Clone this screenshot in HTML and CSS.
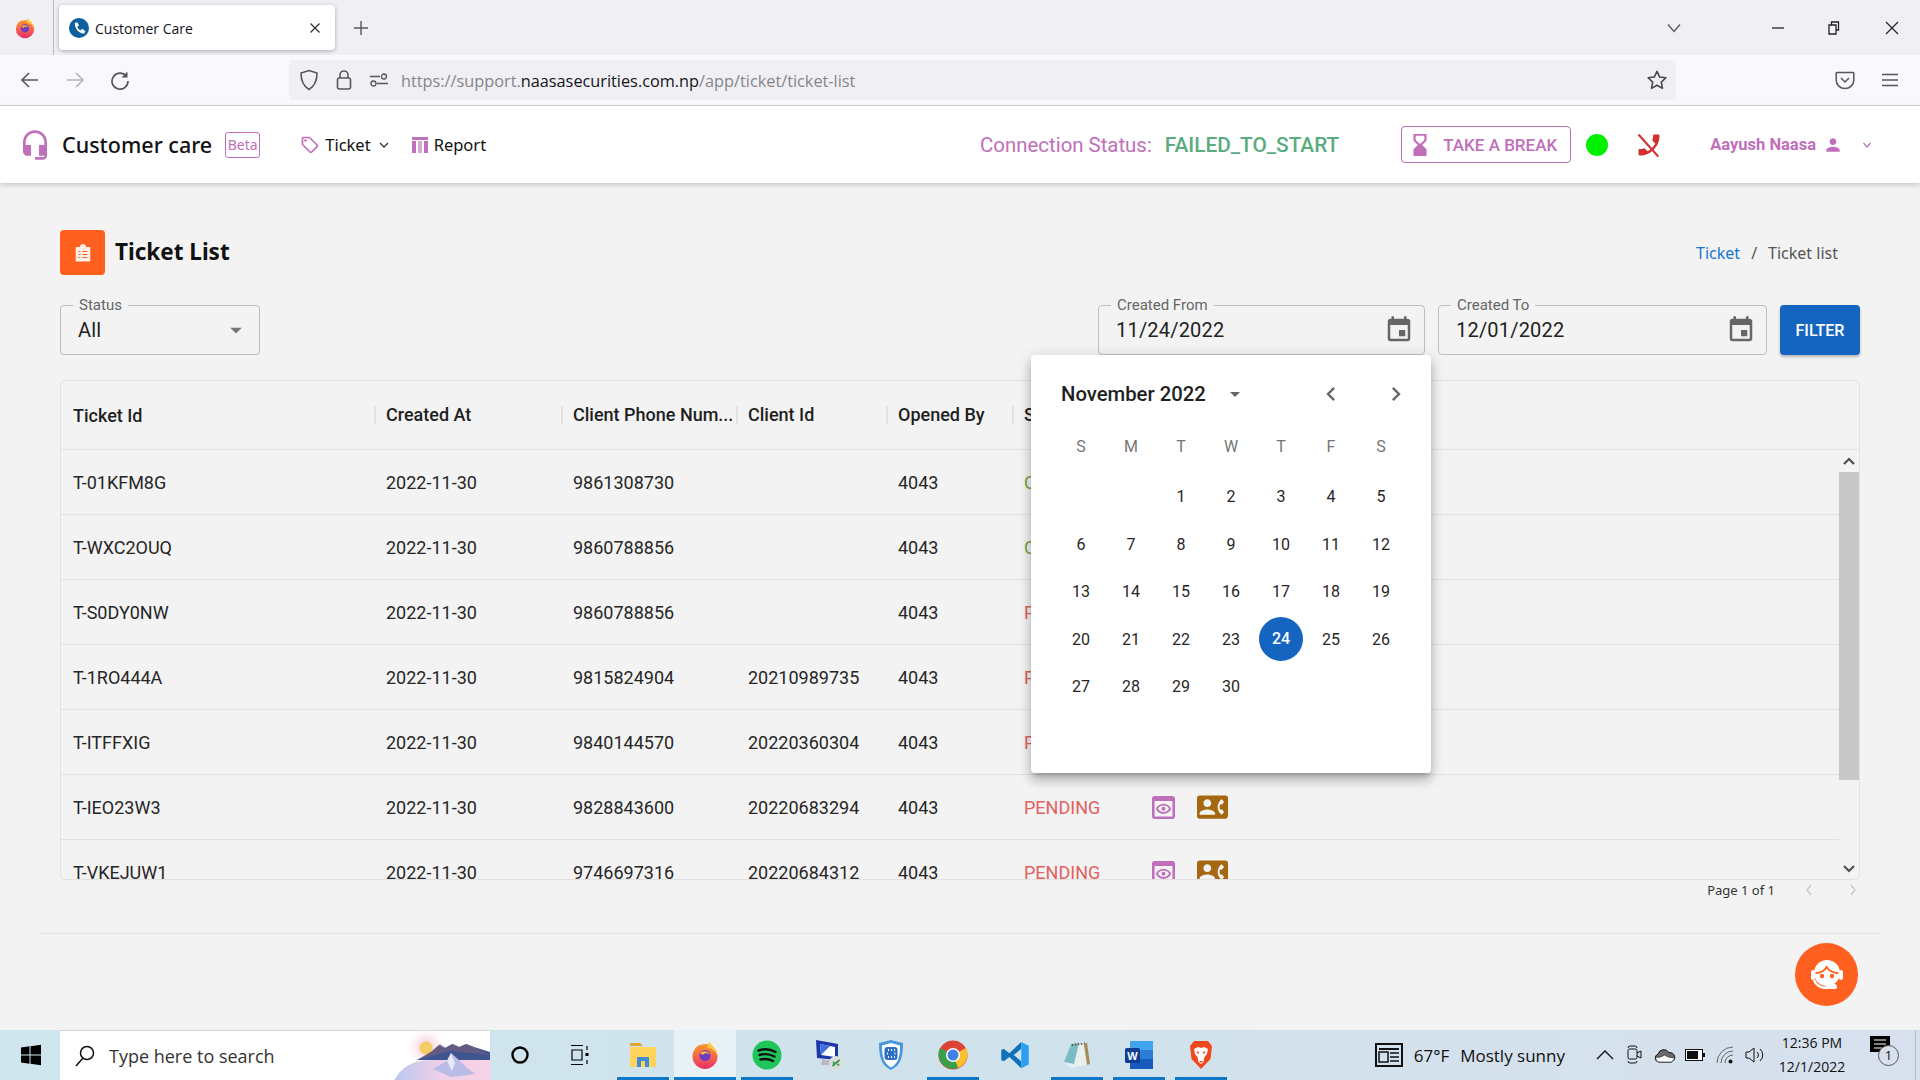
FILE: index.html
```html
<!DOCTYPE html>
<html lang="en">
<head>
    <meta charset="UTF-8">
    <title>Customer Care</title>
    <link rel="stylesheet" href="styles.css">
</head>
<body>
    <!-- browser window top -->
    <div class="tabstrip">
        <div class="ff-slot">
            <svg width="22" height="22" viewBox="0 0 30 30"><defs><linearGradient id="ffGlow" x1="0" y1="0" x2="0" y2="1"><stop offset="0" stop-color="#ff9a2e"/><stop offset="1" stop-color="#ea2f6a"/></linearGradient></defs><circle cx="15" cy="16.500" r="12.500" fill="url(#ffGlow)"/><path d="M19 1c1 4 8 7 8.500 15-2-5-6-8-10-8z" fill="#ffc93c"/><path d="M5 9c2-3 4-4 6-4-1 2 0 3 2 4z" fill="#ff8a2e"/><circle cx="15" cy="15.500" r="5.500" fill="#6f3cc3"/><path d="M10 13c3-3 8-2 10 1-3-1-6-1-7 1z" fill="#ffb02e"/></svg>
        </div>
        <div class="tab">
            <svg width="20" height="20" viewBox="0 0 24 24"><circle cx="12" cy="12" r="12" fill="#0d5f9e"/><path fill="#fff" d="M7 6l3-1 2 4-2 1.500c.5 2 2 3.500 4 4.500l1.500-2 4 2.500-1 3c-6 1-12-6-11.500-12.500z"/></svg>
            <span class="tab-title">Customer Care</span>
            <svg class="tab-close" width="12" height="12" viewBox="0 0 12 12"><path d="M1.500 1.500l9 9m0-9l-9 9" stroke="#333" stroke-width="1.300"/></svg>
        </div>
        <svg class="new-tab" width="16" height="16" viewBox="0 0 16 16"><path d="M8 1v14M1 8h14" stroke="#55555c" stroke-width="1.400"/></svg>
        <div class="window-btns">
            <svg class="tab-list" width="14" height="10" viewBox="0 0 14 10"><path d="M1 1.500l6 7 6-7" fill="none" stroke="#55555c" stroke-width="1.300"/></svg>
            <svg class="win-min" width="12" height="2" viewBox="0 0 12 2"><path d="M0 1h12" stroke="#222" stroke-width="1.300"/></svg>
            <svg class="win-max" width="12" height="14" viewBox="0 0 12 14"><path d="M3.500 3.500V1h7v8H8M1 4h7v9H1z" fill="none" stroke="#222" stroke-width="1.300"/></svg>
            <svg class="win-close" width="14" height="14" viewBox="0 0 14 14"><path d="M1 1l12 12m0-12L1 13" stroke="#222" stroke-width="1.200"/></svg>
        </div>
    </div>
    <div class="toolbar">
        <svg class="tool-back" width="20" height="20" viewBox="0 0 20 20"><path d="M18 10H3m6-7l-7 7 7 7" fill="none" stroke="#55555c" stroke-width="1.600"/></svg>
        <svg class="tool-fwd" width="20" height="20" viewBox="0 0 20 20"><path d="M2 10h15m-6-7l7 7-7 7" fill="none" stroke="#b4b4b8" stroke-width="1.600"/></svg>
        <svg class="tool-reload" width="20" height="20" viewBox="0 0 20 20"><path d="M16.500 6.500A8 8 0 1 0 18 11" fill="none" stroke="#55555c" stroke-width="1.700"/><path d="M17.500 1.500v6h-6z" fill="#55555c"/></svg>
        <div class="urlbar">
            <svg class="url-shield" width="20" height="22" viewBox="0 0 20 22"><path d="M10 1.500l8 2.500c0 8-2 13-8 16.500C4 17 2 12 2 4z" fill="none" stroke="#55555c" stroke-width="1.600"/></svg>
            <svg class="url-lock" width="16" height="22" viewBox="0 0 16 22"><rect x="1.500" y="9" width="13" height="11" rx="2" fill="none" stroke="#55555c" stroke-width="1.600"/><path d="M4 9V6a4 4 0 0 1 8 0v3" fill="none" stroke="#55555c" stroke-width="1.600"/></svg>
            <svg class="url-tune" width="20" height="14" viewBox="0 0 20 14"><path d="M1 3.500h10M1.500 10.500H1M8 10.500h11" stroke="#55555c" stroke-width="1.500"/><circle cx="15" cy="3.500" r="2.500" fill="none" stroke="#55555c" stroke-width="1.300"/><circle cx="4.500" cy="10.500" r="2.500" fill="none" stroke="#55555c" stroke-width="1.300"/></svg>
            <span class="url-text">https://support.<b>naasasecurities.com.np</b>/app/ticket/ticket-list</span>
            <svg class="url-star" width="22" height="22" viewBox="0 0 24 24"><path d="M12 2.500l2.900 6.300 6.800.8-5 4.700 1.300 6.800-6-3.400-6 3.400 1.300-6.800-5-4.700 6.800-.8z" fill="none" stroke="#45454c" stroke-width="1.700" stroke-linejoin="round"/></svg>
        </div>
        <svg class="tool-pocket" width="20" height="20" viewBox="0 0 20 20"><path d="M2 2.500h16a.8.8 0 0 1 .8.8V10c0 5-4 8.500-8.800 8.500S1.200 15 1.200 10V3.300a.8.8 0 0 1 .8-.8z" fill="none" stroke="#55555c" stroke-width="1.500"/><path d="M6 8l4 4 4-4" fill="none" stroke="#55555c" stroke-width="1.500"/></svg>
        <svg class="tool-menu" width="16" height="14" viewBox="0 0 16 14"><path d="M0 1.500h16M0 7h16M0 12.500h16" stroke="#55555c" stroke-width="1.600"/></svg>
    </div>

    <!-- app header -->
    <header class="app-header">
        <svg class="brand-icon" width="32" height="32" viewBox="0 0 24 24"><path fill="#c06fbb" d="M12 1c-4.970 0-9 4.030-9 9v7c0 1.660 1.340 3 3 3h3v-8H5v-2c0-3.870 3.130-7 7-7s7 3.130 7 7v2h-4v8h4v1h-7v2h6c1.660 0 3-1.340 3-3V10c0-4.970-4.030-9-9-9z"/></svg>
        <span class="brand-name">Customer care</span>
        <span class="beta">Beta</span>
        <svg class="nav-tag" width="20" height="20" viewBox="0 0 24 24"><path fill="#c06fbb" d="M21.410 11.580l-9-9C12.050 2.220 11.550 2 11 2H4c-1.100 0-2 .9-2 2v7c0 .55.22 1.050.59 1.420l9 9c.36.36.86.58 1.410.58s1.050-.22 1.410-.59l7-7c.37-.36.59-.86.59-1.410s-.23-1.060-.59-1.420zM13 20.010L4 11V4h7v-.01l9 8.990-7 7.020z"/><circle cx="6.500" cy="6.500" r="1.500" fill="#c06fbb"/></svg>
        <span class="nav-link">Ticket</span>
        <svg class="nav-caret" width="10" height="6" viewBox="0 0 10 6"><path d="M1 1l4 4 4-4" fill="none" stroke="#333" stroke-width="1.300"/></svg>
        <svg class="nav-report" width="18" height="18" viewBox="0 0 18 18"><g fill="#c06fbb"><rect x="1" y="1" width="16" height="3"/><rect x="1" y="5" width="4" height="12"/><rect x="7" y="5" width="4" height="12" opacity=".6"/><rect x="13" y="5" width="4" height="12"/></g></svg>
        <span class="nav-link">Report</span>

        <div class="header-right">
            <span class="conn-label">Connection Status:</span>
            <span class="conn-value">FAILED_TO_START</span>
            <button class="break-btn">
                <svg width="20" height="24" viewBox="5 1 14 22"><path fill="#c06fbb" d="M6 2v6h.01L6 8.010 10 12l-4 4 .01.01H6V22h12v-5.990h-.01L18 16l-4-4 4-3.990-.01-.01H18V2H6zm2 1.500h8V7.500l-4 3.500-4-3.500z"/></svg>
                TAKE A BREAK
            </button>
            <span class="status-dot"></span>
            <svg class="phone-off" width="28" height="28" viewBox="0 0 24 24"><path fill="#d32f2f" transform="matrix(-1 0 0 1 24 0)" d="M6.620 10.790c1.440 2.830 3.760 5.140 6.590 6.590l2.200-2.200c.27-.27.67-.36 1.020-.24 1.120.37 2.330.57 3.570.57.55 0 1 .45 1 1V20c0 .55-.45 1-1 1-9.390 0-17-7.610-17-17 0-.55.45-1 1-1h3.500c.55 0 1 .45 1 1 0 1.250.2 2.450.57 3.570.11.35.03.74-.25 1.020l-2.200 2.200z"/><path d="M3 3l17 19" stroke="#d32f2f" stroke-width="1.800"/></svg>
            <span class="user-name">Aayush Naasa</span>
            <svg class="user-icon" width="20" height="20" viewBox="0 0 24 24"><path fill="#c06fbb" d="M12 12c2.210 0 4-1.790 4-4s-1.790-4-4-4-4 1.790-4 4 1.790 4 4 4zm0 2c-2.670 0-8 1.340-8 4v2h16v-2c0-2.660-5.330-4-8-4z"/></svg>
            <svg class="user-caret" width="8" height="6" viewBox="0 0 8 6"><path d="M.5 1L4 5l3.500-4" fill="none" stroke="#c06fbb" stroke-width="1.200"/></svg>
        </div>
    </header>

    <main class="page">
        <div class="title-row">
            <span class="title-icon">
                <svg width="16" height="18" viewBox="0 0 16 18"><path fill="#fff" d="M1.500 3H5a3 3 0 0 1 6 0h3.500a.8.8 0 0 1 .8.8v12.900a.8.8 0 0 1-.8.8h-13a.8.8 0 0 1-.8-.8V3.800a.8.8 0 0 1 .8-.8z" opacity=".9"/><path d="M3.500 7.500h2M7.500 7.500h5M3.500 10.500h2M7.500 10.500h5M3.500 13.500h2M7.500 13.500h5" stroke="#ff5f1f" stroke-width="1.200"/></svg>
            </span>
            <h1>Ticket List</h1>
            <nav class="breadcrumb"><a>Ticket</a><span class="crumb-sep">/</span><span>Ticket list</span></nav>
        </div>

        <div class="filters">
            <div class="field field-status">
                <label>Status</label>
                <span class="field-value">All</span>
                <svg width="28" height="28" viewBox="0 0 24 24"><path fill="#757575" d="M7 10l5 5 5-5z"/></svg>
            </div>
            <div class="field field-from">
                <label>Created From</label>
                <span class="field-value">11/24/2022</span>
                <svg width="30" height="30" viewBox="0 0 24 24"><path fill="#666" d="M17 12h-5v5h5v-5zM16 1v2H8V1H6v2H5c-1.110 0-1.990.9-1.990 2L3 19c0 1.100.89 2 2 2h14c1.100 0 2-.9 2-2V5c0-1.100-.9-2-2-2h-1V1h-2zm3 18H5V8h14v11z"/></svg>
            </div>
            <div class="field field-to">
                <label>Created To</label>
                <span class="field-value">12/01/2022</span>
                <svg width="30" height="30" viewBox="0 0 24 24"><path fill="#666" d="M17 12h-5v5h5v-5zM16 1v2H8V1H6v2H5c-1.110 0-1.990.9-1.990 2L3 19c0 1.100.89 2 2 2h14c1.100 0 2-.9 2-2V5c0-1.100-.9-2-2-2h-1V1h-2zm3 18H5V8h14v11z"/></svg>
            </div>
            <button class="filter-btn">FILTER</button>
        </div>

        <div class="grid-card">
            <div class="grid-head">
                <div class="cell">Ticket Id</div>
                <div class="cell sep">Created At</div>
                <div class="cell sep">Client Phone Num...</div>
                <div class="cell sep">Client Id</div>
                <div class="cell sep">Opened By</div>
                <div class="cell sep">Status</div>
            </div>
            <div class="grid-body">
                <div class="grid-rows">
                    <div class="row"><div class="cell">T-01KFM8G</div><div class="cell">2022-11-30</div><div class="cell">9861308730</div><div class="cell"></div><div class="cell">4043</div><div class="cell st-closed">CLOSED</div></div>
                    <div class="row"><div class="cell">T-WXC2OUQ</div><div class="cell">2022-11-30</div><div class="cell">9860788856</div><div class="cell"></div><div class="cell">4043</div><div class="cell st-closed">CLOSED</div></div>
                    <div class="row"><div class="cell">T-S0DY0NW</div><div class="cell">2022-11-30</div><div class="cell">9860788856</div><div class="cell"></div><div class="cell">4043</div><div class="cell st-pending">PENDING</div></div>
                    <div class="row"><div class="cell">T-1RO444A</div><div class="cell">2022-11-30</div><div class="cell">9815824904</div><div class="cell">20210989735</div><div class="cell">4043</div><div class="cell st-pending">PENDING</div></div>
                    <div class="row"><div class="cell">T-ITFFXIG</div><div class="cell">2022-11-30</div><div class="cell">9840144570</div><div class="cell">20220360304</div><div class="cell">4043</div><div class="cell st-pending">PENDING</div></div>
                    <div class="row"><div class="cell">T-IEO23W3</div><div class="cell">2022-11-30</div><div class="cell">9828843600</div><div class="cell">20220683294</div><div class="cell">4043</div><div class="cell st-pending">PENDING</div>
                        <div class="cell actions">
                            <svg width="23" height="23" viewBox="3 3 18 18"><path fill="#c06fbb" d="M19 3H5c-1.110 0-2 .9-2 2v14c0 1.100.89 2 2 2h14c1.100 0 2-.9 2-2V5c0-1.100-.89-2-2-2zm0 16H5V7h14v12zm-7-8.500c1.840 0 3.480.96 4.340 2.500-.86 1.540-2.500 2.500-4.340 2.500S8.520 14.540 7.660 13c.86-1.540 2.500-2.500 4.340-2.500M12 9c-2.730 0-5.060 1.660-6 4 .94 2.340 3.270 4 6 4s5.060-1.660 6-4c-.94-2.340-3.270-4-6-4zm0 5.500c-.83 0-1.500-.67-1.500-1.500s.67-1.500 1.500-1.500 1.500.67 1.500 1.500-.67 1.500-1.500 1.500z"/></svg>
                            <svg width="31" height="26" viewBox="0 2 24 20"><path fill="#a5670f" d="M22 3H2C.9 3 0 3.900 0 5v14c0 1.100.9 2 2 2h20c1.100 0 1.990-.9 1.990-2L24 5c0-1.100-.9-2-2-2zM8 6c1.660 0 3 1.340 3 3s-1.340 3-3 3-3-1.340-3-3 1.340-3 3-3zm6 12H2v-1c0-2 4-3.100 6-3.100s6 1.100 6 3.100v1zm3.850-4h1.640L21 16l-1.990 1.990c-1.310-.98-2.280-2.380-2.730-3.990-.18-.64-.28-1.310-.28-2s.1-1.360.28-2c.45-1.620 1.420-3.010 2.730-3.990L21 8l-1.510 2h-1.640c-.22.63-.35 1.300-.35 2s.13 1.370.35 2z"/></svg>
                        </div>
                    </div>
                    <div class="row"><div class="cell">T-VKEJUW1</div><div class="cell">2022-11-30</div><div class="cell">9746697316</div><div class="cell">20220684312</div><div class="cell">4043</div><div class="cell st-pending">PENDING</div>
                        <div class="cell actions">
                            <svg width="23" height="23" viewBox="3 3 18 18"><path fill="#c06fbb" d="M19 3H5c-1.110 0-2 .9-2 2v14c0 1.100.89 2 2 2h14c1.100 0 2-.9 2-2V5c0-1.100-.89-2-2-2zm0 16H5V7h14v12zm-7-8.500c1.840 0 3.480.96 4.340 2.500-.86 1.540-2.500 2.500-4.340 2.500S8.520 14.540 7.660 13c.86-1.540 2.500-2.500 4.340-2.500M12 9c-2.730 0-5.060 1.660-6 4 .94 2.340 3.270 4 6 4s5.060-1.660 6-4c-.94-2.340-3.270-4-6-4zm0 5.500c-.83 0-1.500-.67-1.500-1.500s.67-1.500 1.500-1.500 1.500.67 1.500 1.500-.67 1.500-1.500 1.500z"/></svg>
                            <svg width="31" height="26" viewBox="0 2 24 20"><path fill="#a5670f" d="M22 3H2C.9 3 0 3.900 0 5v14c0 1.100.9 2 2 2h20c1.100 0 1.990-.9 1.990-2L24 5c0-1.100-.9-2-2-2zM8 6c1.660 0 3 1.340 3 3s-1.340 3-3 3-3-1.340-3-3 1.340-3 3-3zm6 12H2v-1c0-2 4-3.100 6-3.100s6 1.100 6 3.100v1zm3.850-4h1.640L21 16l-1.990 1.990c-1.310-.98-2.280-2.380-2.730-3.990-.18-.64-.28-1.310-.28-2s.1-1.360.28-2c.45-1.620 1.420-3.010 2.730-3.990L21 8l-1.510 2h-1.640c-.22.63-.35 1.300-.35 2s.13 1.370.35 2z"/></svg>
                        </div>
                    </div>
                </div>
                <div class="scrollbar">
                    <svg width="14" height="10" viewBox="0 0 14 10"><path d="M2 8l5-5 5 5" fill="none" stroke="#505050" stroke-width="2.200"/></svg>
                    <div class="scroll-thumb"></div>
                    <svg width="14" height="10" viewBox="0 0 14 10"><path d="M2 2l5 5 5-5" fill="none" stroke="#505050" stroke-width="2.200"/></svg>
                </div>
            </div>
        </div>

        <div class="pager">
            <span>Page 1 of 1</span>
            <svg width="8" height="12" viewBox="0 0 8 12"><path d="M6 1L2 6l4 5" fill="none" stroke="#c8c8c8" stroke-width="1.300"/></svg>
            <svg class="pager-next" width="8" height="12" viewBox="0 0 8 12"><path d="M2 1l4 5-4 5" fill="none" stroke="#c8c8c8" stroke-width="1.300"/></svg>
        </div>
        <hr class="page-rule">

        <!-- date picker popup -->
        <div class="calendar">
            <div class="cal-head">
                <span class="cal-month">November 2022</span>
                <svg class="cal-caret" width="24" height="24" viewBox="0 0 24 24"><path fill="#666" d="M7 10l5 5 5-5z"/></svg>
                <svg class="cal-prev" width="28" height="28" viewBox="0 0 24 24"><path fill="#666" d="M15.410 7.410 14 6l-6 6 6 6 1.410-1.410L10.830 12z"/></svg>
                <svg class="cal-next" width="28" height="28" viewBox="0 0 24 24"><path fill="#666" d="M10 6 8.590 7.410 13.170 12l-4.580 4.590L10 18l6-6z"/></svg>
            </div>
            <div class="cal-week"><span>S</span><span>M</span><span>T</span><span>W</span><span>T</span><span>F</span><span>S</span></div>
            <div class="cal-days">
                <span></span><span></span><span>1</span><span>2</span><span>3</span><span>4</span><span>5</span>
                <span>6</span><span>7</span><span>8</span><span>9</span><span>10</span><span>11</span><span>12</span>
                <span>13</span><span>14</span><span>15</span><span>16</span><span>17</span><span>18</span><span>19</span>
                <span>20</span><span>21</span><span>22</span><span>23</span><span class="day-selected">24</span><span>25</span><span>26</span>
                <span>27</span><span>28</span><span>29</span><span>30</span>
            </div>
        </div>

        <div class="chat-fab">
            <svg width="36" height="34" viewBox="0 0 36 34"><rect x="2" y="12" width="4" height="10" rx="2" fill="#fff"/><rect x="30" y="12" width="4" height="10" rx="2" fill="#fff"/><circle cx="18" cy="15" r="13" fill="#fff"/><path d="M6.500 15c5 0 9-2 11-6 2.500 4 6 6 12 6" fill="none" stroke="#ff5f1f" stroke-width="1.800"/><circle cx="13" cy="18" r="2.200" fill="#ff5f1f"/><circle cx="23" cy="18" r="2.200" fill="#ff5f1f"/><path d="M5 22c2 5 6 8 13 8" fill="none" stroke="#fff" stroke-width="2.500"/><rect x="17" y="26" width="11" height="5" rx="2.500" fill="#fff"/></svg>
        </div>
    </main>

    <!-- windows taskbar -->
    <footer class="taskbar">
        <svg class="win-logo" width="22" height="22" viewBox="0 0 22 22"><path d="M1 3.500l8.500-1.200V10.500H1zM10.500 2.200L21 .7v9.800H10.500zM1 11.500h8.500v8.200L1 18.500zM10.500 11.500H21v9.800l-10.500-1.500z" fill="#000"/></svg>
        <div class="search-box">
            <svg width="22" height="24" viewBox="0 0 22 24"><circle cx="13" cy="9" r="6.500" fill="none" stroke="#111" stroke-width="1.500"/><path d="M9 14l-7 8" stroke="#111" stroke-width="1.500"/></svg>
            <span>Type here to search</span>
            <svg class="search-art" width="100" height="50" viewBox="0 0 100 50"><defs><linearGradient id="lake" x1="0" y1="0" x2="1" y2="0"><stop offset="0" stop-color="#b9c8ee"/><stop offset=".5" stop-color="#f1cfe8"/><stop offset="1" stop-color="#f6d3e6"/></linearGradient><radialGradient id="glow"><stop offset="0" stop-color="#f6b9c8"/><stop offset="1" stop-color="#fff" stop-opacity="0"/></radialGradient></defs><circle cx="36" cy="16" r="22" fill="url(#glow)"/><circle cx="36" cy="17" r="6.500" fill="#f6cd62"/><path d="M4 50c6-13 18-20 34-21h62v21z" fill="url(#lake)"/><path d="M27 29l14-8 8-7 6 3 7-4 7 3 7-3 8 3 16 5v8z" fill="#3e5590"/><path d="M30 28l12-8 8-7 6 4 7-4 7 3 7-3 7 3 16 8-40-4z" fill="#7e5f7e" opacity=".6"/><path d="M43 38l14-8 4-8 8 7 8 8 8 6-24 3z" fill="#b9bce6"/><path d="M57 30l4-8 4 10-3 8z" fill="#e7e8f8"/></svg>
        </div>
        <svg class="task-circle" width="20" height="20" viewBox="0 0 20 20"><circle cx="10" cy="10" r="7.500" fill="none" stroke="#000" stroke-width="2.400"/></svg>
        <svg class="task-view" width="20" height="20" viewBox="0 0 20 20"><path d="M1 .5h12M1 19.500h12M2 5h10v10H2zM17 1v4M17 15v4" fill="none" stroke="#000" stroke-width="1.200"/><rect x="15.500" y="8" width="3" height="3" fill="#000"/></svg>
        <div class="task-apps">
            <div class="app on"><svg width="28" height="26" viewBox="0 0 28 26"><path d="M1 1h10l3 3H1z" fill="#e0a42c"/><path d="M1 5h26v20H1z" fill="#ffd35c"/><path d="M8 25v-9a1 1 0 0 1 1-1h10a1 1 0 0 1 1 1v9h-4v-6h-4v6z" fill="#3a8dd6"/></svg></div>
            <div class="app on active"><svg width="30" height="30" viewBox="0 0 30 30"><circle cx="15" cy="16.500" r="12.500" fill="url(#ffGlow)"/><path d="M19 1c1 4 8 7 8.500 15-2-5-6-8-10-8z" fill="#ffc93c"/><path d="M5 9c2-3 4-4 6-4-1 2 0 3 2 4z" fill="#ff8a2e"/><circle cx="15" cy="15.500" r="5.500" fill="#6f3cc3"/><path d="M10 13c3-3 8-2 10 1-3-1-6-1-7 1z" fill="#ffb02e"/></svg></div>
            <div class="app on"><svg width="30" height="30" viewBox="0 0 30 30"><circle cx="15" cy="15" r="14.500" fill="#1fc45a"/><path d="M6.500 10.500c6-2 12-1.500 17 1.500M7.500 15c5-1.500 10.500-1 15 1.500M8.500 19.500c4.500-1 9-.5 12.500 1.500" fill="none" stroke="#111" stroke-width="2.400" stroke-linecap="round"/></svg></div>
            <div class="app"><svg width="30" height="32" viewBox="0 0 30 32"><path d="M2 1l22 4v16L3 19z" fill="#1f36a8"/><path d="M6 5l15 3v10L7 16z" fill="#fff"/><path d="M6 5l10 2-9 9z" fill="#3e6fe0"/><path d="M8 20l10 2v4H7z" fill="#b9b9c4"/><circle cx="22" cy="24" r="7" fill="#dcdcdc"/><path d="M18.500 27l7-6M19 23l1.500 1.500M23.500 25l1.500 1.500" stroke="#2e9e4a" stroke-width="1.800"/></svg></div>
            <div class="app"><svg width="28" height="32" viewBox="0 0 28 32"><path d="M14 1l12 3c0 14-2 22-12 27C4 26 2 18 2 4z" fill="#4a97dc"/><path d="M14 4l9 2.500c0 11-1.500 17.500-9 22-7.500-4.500-9-11-9-22z" fill="#fff"/><rect x="7.500" y="8" width="13" height="13" rx="3" fill="#2d6fc2"/><path d="M11 11h1M14 11h1M17 11h1M10 14.500h1M17.500 14.500h1M11 18h1M14 18h1M17 18h1" stroke="#fff" stroke-width="1.800"/></svg></div>
            <div class="app on"><svg width="30" height="30" viewBox="0 0 30 30"><circle cx="15" cy="15" r="14.500" fill="#db4437"/><path d="M15 15L28 8a14.500 14.500 0 0 1-8 20z" fill="#fbc02d"/><path d="M15 15l5 13A14.500 14.500 0 0 1 2 8z" fill="#3aa04a"/><circle cx="15" cy="15" r="7" fill="#fff"/><circle cx="15" cy="15" r="5.500" fill="#3f80e4"/></svg></div>
            <div class="app"><svg width="30" height="30" viewBox="0 0 24 24"><path d="M17 1.500L7.500 10.500 3 7 1 8v8l2 1 4.500-3.500L17 22.500V17l-6-5 6-5z" fill="#0f72b8"/><path d="M17 1.500l6 3v15l-6 3z" fill="#2aa0ee"/></svg></div>
            <div class="app on"><svg width="28" height="30" viewBox="0 0 28 30"><path d="M1 22L8 4l16-2 3 22-19 4z" fill="#e8f0ee"/><path d="M1 22L8 4l8-1-5 21z" fill="#7bbcc4"/><path d="M24 2l3 22-3 1-3-20z" fill="#a68c5c"/><path d="M9 4l1 2M12 3.500l1 2M15 3l1 2M18 3l1 2M21 2.500l1 2" stroke="#555" stroke-width="1.300"/></svg></div>
            <div class="app on"><svg width="30" height="30" viewBox="0 0 30 30"><rect x="6" y="1" width="23" height="28" rx="2" fill="#2b7cd3"/><rect x="6" y="1" width="23" height="9" fill="#41a5ee"/><rect x="6" y="19" width="23" height="10" fill="#185abd"/><rect x="1" y="8" width="15" height="15" rx="1.500" fill="#103f91"/><text x="8.500" y="19.500" class="word-w">W</text></svg></div>
            <div class="app on"><svg width="26" height="30" viewBox="0 0 26 30"><path d="M6 1h14l4 5-1.500 13L13 29 3.500 19 2 6z" fill="#f1481c"/><path d="M6 9l4-2 3 1 3-1 4 2-1 5-2.500 3-1 5-2.500 2-2.500-2-1-5L7 14z" fill="#fff"/><path d="M11 21h4l-2 2z" fill="#f1481c"/><path d="M9 12l2 1M17 12l-2 1" stroke="#f1481c" stroke-width="1.400"/></svg></div>
        </div>
        <div class="tray">
            <svg width="28" height="24" viewBox="0 0 28 24"><rect x="1" y="1" width="26" height="22" fill="none" stroke="#111" stroke-width="2"/><rect x="4" y="5" width="20" height="2" fill="#111"/><rect x="4" y="9" width="9" height="10" fill="none" stroke="#111" stroke-width="1.500"/><path d="M15 10h9M15 14h9M15 18h9" stroke="#111" stroke-width="1.500"/></svg>
            <span class="weather">67°F</span>
            <span class="weather sky">Mostly sunny</span>
            <div class="tray-icons">
                <svg width="18" height="10" viewBox="0 0 18 10"><path d="M1 9l8-8 8 8" fill="none" stroke="#111" stroke-width="1.300"/></svg>
                <svg width="16" height="22" viewBox="0 0 16 22"><rect x="1" y="5" width="9" height="10" rx="1.500" fill="none" stroke="#111"/><path d="M10 9l4-2v7l-4-2M3 2h5M3 19h5M1 4a2 2 0 0 1 2-2M8 2a2 2 0 0 1 2 2M1 17a2 2 0 0 0 2 2M8 19a2 2 0 0 0 2-2" fill="none" stroke="#111"/></svg>
                <svg width="22" height="16" viewBox="0 0 22 16"><path d="M5 15a4 4 0 0 1-1-7.800 6 6 0 0 1 11-1.500 4.500 4.500 0 0 1 2 9.300z" fill="#6c6c6c" stroke="#111"/><path d="M1.500 10c3 1 6 0 9-2 3 2 6 3 10 2.500-.5 3-2 4.500-4 4.500H5c-2 0-3-2-3.500-5z" fill="#fff" stroke="#111" stroke-width=".6"/></svg>
                <svg width="20" height="12" viewBox="0 0 20 12"><rect x=".5" y=".5" width="17" height="11" fill="#fff" stroke="#111"/><rect x="2" y="2" width="11" height="8" fill="#111"/><rect x="18" y="4" width="2" height="4" fill="#111"/></svg>
                <svg width="20" height="20" viewBox="0 0 20 20"><path d="M2 18A16 16 0 0 1 18 2M6 18A12 12 0 0 1 18 6M10 18a8 8 0 0 1 8-8" fill="none" stroke="#666"/><circle cx="15.500" cy="16.500" r="2" fill="#111"/></svg>
                <svg width="20" height="20" viewBox="0 0 20 20"><path d="M1 7h3l5-4v14l-5-4H1zM12 7a4 4 0 0 1 0 6M15 4a8 8 0 0 1 0 12" fill="none" stroke="#111"/></svg>
            </div>
            <div class="clock"><span>12:36 PM</span><span>12/1/2022</span></div>
            <div class="notify">
                <svg width="20" height="18" viewBox="0 0 20 18"><path d="M0 0h20v16H0z" fill="#000"/><path d="M4 4h12M4 8h12M4 12h8" stroke="#fff"/></svg>
                <span class="notify-count">1</span>
            </div>
            <div class="show-desktop"></div>
        </div>
    </footer>
</body>
</html>
```

FILE: styles.css
```css
* {
    box-sizing: border-box;
}
html, body {
    margin: 0;
    height: 1080px;
    overflow: hidden;
}
body {
    display: flex;
    flex-direction: column;
    width: 1920px;
    font-family: Roboto, sans-serif;
    background-color: #f3f3f3;
    color: #1f1f1f;
}
svg {
    display: block;
    flex: none;
}

/* browser */
.tabstrip {
    height: 55px;
    background-color: #f0f0f4;
    display: flex;
    align-items: center;
}
.ff-slot {
    width: 54px;
    height: 55px;
    border-right: 1px solid #b9b9bd;
    padding: 17px 0 0 14px;
}
.tab {
    width: 276px;
    height: 45px;
    margin-left: 5px;
    background-color: #fff;
    border-radius: 4px;
    box-shadow: 0 1px 4px rgba(0, 0, 0, .3);
    display: flex;
    align-items: center;
    padding: 0 14px 0 10px;
}
.tab-title {
    margin-left: 6px;
    padding-top: 1px;
    font: 14px "Open Sans", sans-serif;
    color: #15141a;
    flex: 1;
}
.new-tab {
    margin-left: 18px;
}
.window-btns {
    margin-left: auto;
    display: flex;
    align-items: center;
}
.tab-list {
    margin-right: 91px;
}
.win-min {
    margin-right: 44px;
}
.win-max {
    margin-right: 45px;
}
.win-close {
    margin-right: 21px;
}
.toolbar {
    height: 51px;
    background-color: #f9f9fb;
    border-bottom: 1px solid #cfcfd4;
    display: flex;
    align-items: center;
    padding: 0 0 1px 20px;
}
.tool-fwd, .tool-reload {
    margin-left: 25px;
}
.urlbar {
    margin-left: 159px;
    width: 1387px;
    height: 40px;
    background-color: #f0f0f4;
    border-radius: 4px;
    display: flex;
    align-items: center;
    padding: 0 8px 0 10px;
}
.url-lock, .url-tune {
    margin-left: 17px;
}
.url-text {
    margin-left: 12px;
    padding-top: 2px;
    font: 16.3px "Open Sans", sans-serif;
    color: #85858a;
    flex: 1;
    white-space: nowrap;
}
.url-text b {
    font-weight: 400;
    color: #15141a;
}
.tool-pocket {
    margin-left: 159px;
}
.tool-menu {
    margin-left: 27px;
}

/* app header */
.app-header {
    height: 77px;
    background-color: #fff;
    box-shadow: 0 2px 5px rgba(0, 0, 0, .18);
    display: flex;
    align-items: center;
    padding-left: 19px;
    position: relative;
    z-index: 2;
}
.brand-name {
    margin-left: 11px;
    font: 500 21.5px "Noto Sans", sans-serif;
    color: #111;
    white-space: nowrap;
}
.beta {
    margin-left: 13px;
    border: 1px solid #c06fbb;
    border-radius: 3px;
    color: #c06fbb;
    width: 35px;
    height: 26px;
    font: 14px/24px "Noto Sans", sans-serif;
    text-align: center;
}
.nav-tag {
    margin-left: 40px;
}
.nav-link {
    margin-left: 5px;
    font: 16.5px "Noto Sans", sans-serif;
    color: #111;
}
.nav-caret {
    margin-left: 8px;
}
.nav-report {
    margin-left: 22px;
}
.header-right {
    margin-left: auto;
    display: flex;
    align-items: center;
    padding-right: 49px;
}
.conn-label {
    font-size: 20.4px;
    color: #c06fbb;
}
.conn-value {
    margin-left: 13px;
    font-size: 20.8px;
    font-weight: 500;
    color: #5aab7e;
}
.break-btn {
    margin-left: 62px;
    width: 170px;
    height: 37px;
    background: #fff;
    border: 1px solid #b76fb0;
    border-radius: 4px;
    display: flex;
    align-items: center;
    padding: 0 0 0 8px;
    gap: 13px;
    font: 500 17px Roboto, sans-serif;
    color: #c06fbb;
}
.status-dot {
    margin-left: 15px;
    width: 22px;
    height: 22px;
    border-radius: 50%;
    background-color: #00f000;
}
.phone-off {
    margin-left: 27px;
}
.user-name {
    margin-left: 47px;
    font-size: 16.5px;
    font-weight: 700;
    color: #c06fbb;
}
.user-icon {
    margin-left: 7px;
}
.user-caret {
    margin-left: 20px;
}

/* page */
.page {
    flex: 1;
    padding: 47px 60px 0;
    position: relative;
}
.title-row {
    display: flex;
    align-items: center;
    height: 45px;
}
.title-icon {
    width: 45px;
    height: 45px;
    border-radius: 4px;
    background-color: #ff5f1f;
    display: flex;
    align-items: center;
    justify-content: center;
}
h1 {
    margin: 0 0 0 10px;
    padding-bottom: 2px;
    font: 700 22.5px "Noto Sans", sans-serif;
    color: #111;
}
.breadcrumb {
    margin-left: auto;
    padding-right: 22px;
    display: flex;
    font: 16px "Noto Sans", sans-serif;
    color: #555;
}
.breadcrumb a {
    color: #1976d2;
}
.crumb-sep {
    margin: 0 11px;
}
.filters {
    display: flex;
    gap: 13px;
    margin-top: 30px;
    height: 50px;
}
.field {
    position: relative;
    border: 1px solid #bdbdbd;
    border-radius: 4px;
    display: flex;
    align-items: center;
    justify-content: space-between;
    padding: 0 10px 0 17px;
}
.field label {
    position: absolute;
    top: -9px;
    left: 12px;
    padding: 0 6px;
    background-color: #f3f3f3;
    font-size: 15px;
    line-height: 17px;
    color: #666;
}
.field-value {
    font-size: 20px;
    color: #222;
    letter-spacing: .2px;
}
.field-status {
    width: 200px;
    margin-right: auto;
    padding-right: 9px;
}
.field-from {
    width: 327px;
}
.field-to {
    width: 329px;
}
.filter-btn {
    width: 80px;
    background-color: #1565c0;
    color: #fff;
    border: 0;
    border-radius: 4px;
    font: 500 16px Roboto, sans-serif;
    box-shadow: 0 2px 3px rgba(0, 0, 0, .25);
}

/* ticket grid */
.grid-card {
    margin-top: 25px;
    height: 500px;
    border: 1px solid #e2e2e2;
    border-radius: 4px;
    overflow: hidden;
}
.grid-head {
    height: 69px;
    border-bottom: 1px solid #e2e2e2;
    display: grid;
    grid-template-columns: 313px 187px 175px 150px 126px 1fr;
    align-items: center;
    font-weight: 500;
    font-size: 18px;
}
.cell {
    padding-left: 12px;
    white-space: nowrap;
}
.cell.sep {
    border-left: 2px solid #e2e2e2;
    padding-left: 10px;
    line-height: 18px;
}
.grid-body {
    display: flex;
    height: 429px;
}
.grid-rows {
    flex: 1;
    overflow: hidden;
}
.row {
    height: 65px;
    border-bottom: 1px solid #e2e2e2;
    display: grid;
    grid-template-columns: 313px 187px 175px 150px 126px 140px 1fr;
    align-items: center;
    font-size: 18px;
    color: #262626;
}
.st-closed {
    color: #7aa03a;
}
.st-pending {
    color: #e4605e;
}
.actions {
    display: flex;
    align-items: center;
    gap: 22px;
    padding-left: 0;
}
.scrollbar {
    width: 20px;
    display: flex;
    flex-direction: column;
    align-items: center;
    padding: 6px 0 5px;
}
.scroll-thumb {
    width: 20px;
    height: 308px;
    margin: 6px 0 auto;
    background-color: #c8c8c8;
}
.pager {
    display: flex;
    justify-content: flex-end;
    align-items: center;
    height: 20px;
    font: 13px "Noto Sans", sans-serif;
    color: #333;
    gap: 30px;
    padding-right: 3px;
}
.pager-next {
    margin-left: 6px;
}
.page-rule {
    margin: 33px -20px 0;
    border: 0;
    border-top: 1px solid #e4e4e4;
}

/* calendar popup */
.calendar {
    position: absolute;
    left: 1031px;
    top: 172px;
    width: 400px;
    height: 418px;
    background-color: #fff;
    border-radius: 4px;
    box-shadow: 0 5px 5px -3px rgba(0, 0, 0, .2), 0 8px 10px 1px rgba(0, 0, 0, .14), 0 3px 14px 2px rgba(0, 0, 0, .12);
    padding: 0 25px;
}
.cal-head {
    height: 78px;
    display: flex;
    align-items: center;
    padding-left: 5px;
}
.cal-month {
    font-size: 20.3px;
    font-weight: 500;
    color: #1f1f1f;
    white-space: nowrap;
}
.cal-caret {
    margin-left: 17px;
}
.cal-prev {
    margin-left: 70px;
}
.cal-next {
    margin-left: 37px;
}
.cal-week, .cal-days {
    display: grid;
    grid-template-columns: repeat(7, 50px);
    justify-items: center;
    align-items: center;
}
.cal-week {
    height: 26px;
    font-size: 16px;
    color: #757575;
}
.cal-days {
    margin-top: 14px;
    grid-auto-rows: 47.5px;
    font-size: 16px;
    color: #262626;
}
.day-selected {
    width: 44px;
    height: 44px;
    border-radius: 50%;
    background-color: #1565c0;
    color: #fff;
    font-weight: 500;
    text-align: center;
    line-height: 44px;
}
.chat-fab {
    position: absolute;
    left: 1795px;
    top: 760px;
    width: 63px;
    height: 63px;
    border-radius: 50%;
    background-color: #ff5f1f;
    display: flex;
    align-items: center;
    justify-content: center;
}

/* taskbar */
.taskbar {
    height: 50px;
    background: linear-gradient(90deg, #cfe6ef 0%, #d0e2ec 55%, #d8e0ee 100%);
    display: flex;
    align-items: center;
}
.win-logo {
    margin-left: 20px;
}
.search-box {
    margin-left: 18px;
    width: 430px;
    height: 50px;
    background-color: #fff;
    border-top: 1px solid #d6d6d6;
    display: flex;
    align-items: center;
    padding-left: 14px;
    font: 18px "Open Sans", sans-serif;
    color: #333;
    position: relative;
    overflow: hidden;
}
.search-box span {
    margin-left: 13px;
}
.search-art {
    position: absolute;
    right: 0;
    top: 0;
}
.task-circle {
    margin-left: 20px;
}
.task-view {
    margin-left: 40px;
}
.task-apps {
    margin-left: 22px;
    display: flex;
}
.app {
    width: 62px;
    height: 50px;
    display: flex;
    align-items: center;
    justify-content: center;
    position: relative;
}
.app.active {
    background-color: #e8f1f5;
}
.app.on::after {
    content: "";
    position: absolute;
    left: 5px;
    right: 5px;
    bottom: 0;
    height: 3px;
    background-color: #0f78c8;
}
.app.active::after {
    left: 0;
    right: 0;
}
.word-w {
    font: 700 11px "Liberation Sans", sans-serif;
    fill: #fff;
    text-anchor: middle;
}
.tray {
    margin-left: auto;
    display: flex;
    align-items: center;
    font: 17px "Open Sans", sans-serif;
    color: #111;
}
.weather {
    margin-left: 11px;
    white-space: nowrap;
}
.sky {
    margin-right: 25px;
}
.tray-icons {
    display: grid;
    grid-template-columns: repeat(6, 30px);
    justify-items: center;
    align-items: center;
}
.clock {
    width: 72px;
    margin-left: 6px;
    display: flex;
    flex-direction: column;
    align-items: center;
    font-size: 14px;
    line-height: 24px;
    white-space: nowrap;
}
.notify {
    position: relative;
    margin: -9px 16px 0 22px;
    width: 29px;
    height: 29px;
}
.notify-count {
    position: absolute;
    left: 8px;
    top: 9px;
    width: 21px;
    height: 21px;
    border: 1px solid #555;
    border-radius: 50%;
    background-color: #d8e0ee;
    font-size: 13px;
    line-height: 19px;
    text-align: center;
}
.show-desktop {
    width: 5px;
    height: 50px;
    border-left: 1px solid #b4bcc8;
}
```
